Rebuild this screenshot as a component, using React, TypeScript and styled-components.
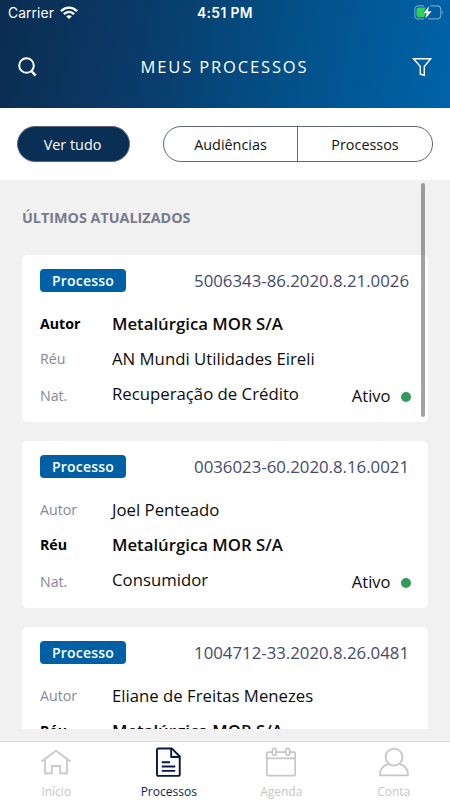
import React from 'react';
import styled, { createGlobalStyle } from 'styled-components';

const Global = createGlobalStyle`
  * { box-sizing: border-box; }
  body { margin: 0; background: #f1f1f1; font-family: 'Open Sans', sans-serif; }
  button { font: inherit; border: 0; padding: 0; background: none; color: inherit; }
`;

const Screen = styled.div`
  width: 450px;
  height: 800px;
  display: flex;
  flex-direction: column;
  overflow: hidden;
  background: #f1f1f1;
`;

const Header = styled.header`
  height: 108px;
  flex: none;
  color: #fff;
  background: linear-gradient(100deg, #0a2d50 0%, #0a3966 28%, #034f86 62%, #0062a8 98%);
`;

const StatusBar = styled.div`
  height: 25px;
  display: grid;
  grid-template-columns: 1fr auto 1fr;
  align-items: center;
  padding: 0 8px 0 8px;
  font-family: Inter, sans-serif;
`;

const Carrier = styled.div`
  display: flex;
  align-items: center;
  gap: 6px;
  font-size: 13.8px;
  letter-spacing: 0.1px;
`;

const Clock = styled.div`
  font-size: 13.8px;
  font-weight: 600;
  letter-spacing: 0.4px;
`;

const BatterySlot = styled.div`
  display: flex;
  justify-content: flex-end;
  margin-right: -1px;
`;

const TitleBar = styled.div`
  height: 84px;
  display: grid;
  grid-template-columns: 40px 1fr 40px;
  align-items: center;
  padding: 0 18px 0 17px;
`;

const IconButton = styled.button<{ $end?: boolean }>`
  display: flex;
  justify-content: ${(p) => (p.$end ? 'flex-end' : 'flex-start')};
`;

const Title = styled.h1`
  margin: 0;
  text-align: center;
  font-size: 16.5px;
  line-height: 24px;
  font-weight: 400;
  letter-spacing: 1.85px;
`;

const Filters = styled.div`
  height: 72px;
  flex: none;
  display: flex;
  justify-content: space-between;
  align-items: center;
  padding: 0 17px;
  background: #fff;
  font-size: 14.4px;
`;

const AllButton = styled.button`
  width: 113px;
  height: 36px;
  border: 1px solid #5d6480;
  border-radius: 18px;
  background: #0a2f54;
  color: #fff;
  padding-right: 2px;
`;

const Segments = styled.div`
  width: 270px;
  height: 36px;
  display: flex;
  border: 1px solid #5d6480;
  border-radius: 18px;
  overflow: hidden;
`;

const Segment = styled.button`
  width: 133px;
  color: #111;
  & + & { width: 135px; border-left: 1px solid #5d6480; }
`;

const Content = styled.main`
  position: relative;
  height: 549px;
  flex: none;
  overflow: hidden;
  padding: 0 22px;
`;

const SectionTitle = styled.h2`
  margin: 0;
  height: 75px;
  line-height: 75px;
  font-size: 14.35px;
  font-weight: 700;
  color: #777b8b;
`;

const CardList = styled.div`
  display: flex;
  flex-direction: column;
  gap: 19.5px;
`;

const Card = styled.article`
  height: 166.5px;
  flex: none;
  padding: 8px 19px 0 18px;
  border-radius: 5px;
  background: #fff;
`;

const CardTop = styled.div`
  height: 35px;
  display: flex;
  justify-content: space-between;
  align-items: center;
  margin-bottom: 8.5px;
`;

const Badge = styled.span`
  width: 86px;
  height: 23.5px;
  border-radius: 4px;
  background: #0060a6;
  color: #fff;
  text-align: center;
  font-size: 14px;
  line-height: 23px;
  font-weight: 600;
  letter-spacing: 0.2px;
`;

const CaseNumber = styled.span`
  font-size: 16.8px;
  font-weight: 400;
  color: #444a6e;
`;

const Row = styled.div<{ $strong?: boolean }>`
  height: 35px;
  display: grid;
  grid-template-columns: 72px 1fr auto;
  align-items: center;
  line-height: 24px;
  color: #0c0c0c;
  font-weight: ${(p) => (p.$strong ? 600 : 400)};
`;

const Label = styled.span<{ $strong?: boolean; $low?: boolean }>`
  font-size: 14.2px;
  font-weight: ${(p) => (p.$strong ? 700 : 400)};
  color: ${(p) => (p.$strong ? '#000' : '#858897')};
  padding-top: ${(p) => (p.$low ? 4 : 0)}px;
`;

const Value = styled.span`
  font-size: 16.75px;
  white-space: nowrap;
`;

const Status = styled.span`
  display: flex;
  align-items: center;
  gap: 10px;
  padding-top: 3px;
  font-size: 16.5px;
`;

const Dot = styled.i`
  width: 10px;
  height: 10px;
  margin: 3px -1.5px 0 0;
  border-radius: 50%;
  background: #339a5c;
`;

const ScrollThumb = styled.div`
  position: absolute;
  top: 3px;
  right: 25px;
  width: 4px;
  height: 234px;
  border-radius: 2px;
  background: rgba(0, 0, 0, 0.36);
`;

const TabBar = styled.nav`
  height: 59px;
  flex: none;
  margin-top: 12px;
  display: grid;
  grid-template-columns: repeat(4, 1fr);
  border-top: 1px solid #dcdcdc;
  background: #fff;
`;

const Tab = styled.button<{ $active?: boolean }>`
  display: flex;
  flex-direction: column;
  align-items: center;
  padding-top: 5px;
  font-size: 12px;
  line-height: 16px;
  color: ${(p) => (p.$active ? '#0c2450' : '#c6c6c6')};
  svg { display: block; margin-bottom: 5px; }
`;

const WifiIcon = () => (
  <svg width="18" height="14" viewBox="0 0 18 14" fill="none" stroke="#fff" strokeWidth="2.4">
    <path d="M1 5.1C5.6.5 12.4.5 17 5.1" />
    <path d="M3.9 8.2c3-2.9 7.2-2.9 10.2 0" />
    <path d="M9 13 6.2 10.2c1.6-1.4 4-1.4 5.6 0z" fill="#fff" stroke="none" />
  </svg>
);

const BatteryIcon = () => (
  <svg width="29" height="15" viewBox="0 0 29 15">
    <path d="M10 .9H4.2A3.4 3.4 0 0 0 .8 4.3v6.2a3.4 3.4 0 0 0 3.4 3.4H10M16 .9h7.3a3.4 3.4 0 0 1 3.4 3.4v6.2a3.4 3.4 0 0 1-3.4 3.4H14" fill="none" stroke="#fff" strokeOpacity=".42" strokeWidth="1.2" />
    <path d="M28 5.2c1 .7 1 3.7 0 4.4z" fill="#fff" opacity=".5" />
    <path d="M4.500 2.600H12L9 8.200h2.500l-1 4H4.500a2 2 0 0 1-2-2V4.600a2 2 0 0 1 2-2z" fill="#31d158" />
    <path d="M15 1.200 9.300 8.200h3.400L11.300 13.700l6.300-7.500h-3.700z" fill="#fff" />
  </svg>
);

const SearchIcon = () => (
  <svg width="20" height="20" viewBox="0 0 20 20" fill="none" stroke="#fff" strokeWidth="2">
    <circle cx="9.500" cy="8.500" r="7.300" />
    <path d="m14.400 14 4.200 4.600" strokeWidth="2.500" />
  </svg>
);

const FunnelIcon = () => (
  <svg width="20" height="20" viewBox="0 0 20 20" fill="none" stroke="#fff" strokeWidth="1.450">
    <path d="M1.500 1.700h17.200L12.300 9.600v8.700l-4-1.200V9.600z" />
  </svg>
);

const HomeIcon = () => (
  <svg width="30" height="32" viewBox="0 0 30 32" fill="none" stroke="currentColor" strokeWidth="1.700">
    <path d="M.6 14.500 15 3.900 29.400 14.500" />
    <path d="M4 12.500v13.800h6.900v-7.400h8.200v7.400H26V12.500" />
  </svg>
);

const DocumentIcon = () => (
  <svg width="25" height="32" viewBox="0 0 26 32" fill="none" stroke="#071746" strokeWidth="2" strokeLinejoin="round">
    <path d="M2.500 1h14.200l8 8.200v18.700a1.500 1.500 0 0 1-1.500 1.500H2.500A1.500 1.500 0 0 1 1 27.900V2.500A1.500 1.500 0 0 1 2.500 1z" />
    <path d="M15.800 1.200v8.500h8.500M6 15.200h8.500M6 19.700h14M6 24.200h14" />
  </svg>
);

const CalendarIcon = () => (
  <svg width="30" height="32" viewBox="0 0 30 32" fill="none" stroke="currentColor" strokeWidth="1.700">
    <path d="M6.300 5.200H2A1.200 1.200 0 0 0 .8 6.400v21a1.200 1.200 0 0 0 1.200 1.200h26a1.200 1.200 0 0 0 1.200-1.200v-21A1.200 1.200 0 0 0 28 5.200h-4.300M10.300 5.200h9.400M.8 11.400h28.400" />
    <rect x="6.400" y="1.400" width="3.600" height="7" rx="1.600" />
    <rect x="20" y="1.400" width="3.600" height="7" rx="1.600" />
  </svg>
);

const UserIcon = () => (
  <svg width="30" height="32" viewBox="0 0 31 32" fill="none" stroke="currentColor" strokeWidth="1.900">
    <circle cx="15.500" cy="9.900" r="8.700" />
    <path d="M10 16.800C4.500 18.600 1.200 22.100 1.200 26.600v2.200h28.600v-2.200c0-4.500-3.300-8-8.800-9.800" />
  </svg>
);

interface Case {
  number: string;
  author: string;
  defendant: string;
  nature: string;
  client: 'author' | 'defendant';
}

const cases: Case[] = [
  { number: '5006343-86.2020.8.21.0026', author: 'Metalúrgica MOR S/A', defendant: 'AN Mundi Utilidades Eireli', nature: 'Recuperação de Crédito', client: 'author' },
  { number: '0036023-60.2020.8.16.0021', author: 'Joel Penteado', defendant: 'Metalúrgica MOR S/A', nature: 'Consumidor', client: 'defendant' },
  { number: '1004712-33.2020.8.26.0481', author: 'Eliane de Freitas Menezes', defendant: 'Metalúrgica MOR S/A', nature: 'Consumidor', client: 'defendant' },
];

const CaseCard = ({ item }: { item: Case }) => {
  const isAuthor = item.client === 'author';
  return (
    <Card>
      <CardTop>
        <Badge>Processo</Badge>
        <CaseNumber>{item.number}</CaseNumber>
      </CardTop>
      <Row $strong={isAuthor}>
        <Label $strong={isAuthor}>Autor</Label>
        <Value>{item.author}</Value>
      </Row>
      <Row $strong={!isAuthor}>
        <Label $strong={!isAuthor}>Réu</Label>
        <Value>{item.defendant}</Value>
      </Row>
      <Row>
        <Label $low>Nat.</Label>
        <Value>{item.nature}</Value>
        <Status>Ativo<Dot /></Status>
      </Row>
    </Card>
  );
};

export default function App() {
  return (
    <Screen>
      <Global />
      <Header>
        <StatusBar>
          <Carrier>Carrier <WifiIcon /></Carrier>
          <Clock>4:51 PM</Clock>
          <BatterySlot><BatteryIcon /></BatterySlot>
        </StatusBar>
        <TitleBar>
          <IconButton aria-label="Buscar"><SearchIcon /></IconButton>
          <Title>MEUS PROCESSOS</Title>
          <IconButton $end aria-label="Filtrar"><FunnelIcon /></IconButton>
        </TitleBar>
      </Header>
      <Filters>
        <AllButton>Ver tudo</AllButton>
        <Segments>
          <Segment>Audiências</Segment>
          <Segment>Processos</Segment>
        </Segments>
      </Filters>
      <Content>
        <SectionTitle>ÚLTIMOS ATUALIZADOS</SectionTitle>
        <CardList>
          {cases.map((item) => <CaseCard key={item.number} item={item} />)}
        </CardList>
        <ScrollThumb />
      </Content>
      <TabBar>
        <Tab><HomeIcon />Início</Tab>
        <Tab $active><DocumentIcon />Processos</Tab>
        <Tab><CalendarIcon />Agenda</Tab>
        <Tab><UserIcon />Conta</Tab>
      </TabBar>
    </Screen>
  );
}
